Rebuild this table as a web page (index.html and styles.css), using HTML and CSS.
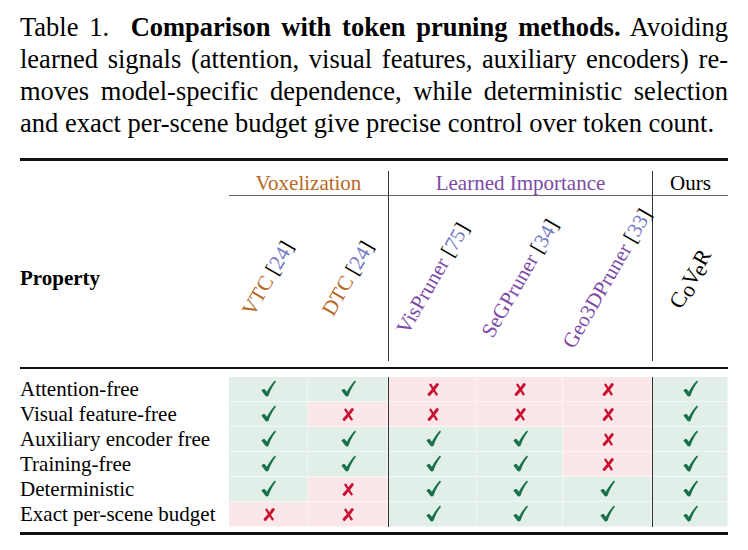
FILE: index.html
```html
<!DOCTYPE html>
<html lang="en">

<head>
    <meta charset="UTF-8">
    <meta name="viewport" content="width=device-width, initial-scale=1.0">
    <title>Table 1</title>
    <link rel="stylesheet" href="styles.css">
</head>

<body>
    <svg class="defs" aria-hidden="true">
        <symbol id="ck" viewBox="0 0 15 17">
            <path d="M0.4 10.6 C1.4 9.2 3 8.4 4 9.4 L5.9 11.8 C8.3 7.4 10.8 3.8 13.9 0.6 L15 1.8 C12.1 5.2 9.7 9.6 7.6 15.5 C7 16.7 5.1 16.9 4.4 15.8 Z" />
        </symbol>
        <symbol id="xx" viewBox="0 0 12 13">
            <path d="M10.2 1.6 C8 4.4 5.4 8 2.2 11.4" stroke-width="3" stroke-linecap="round" fill="none" />
            <path d="M3.4 1.6 C5.3 4.6 7.4 8 9.6 11.4" stroke-width="2.3" stroke-linecap="round" fill="none" />
        </symbol>
    </svg>

    <div class="page">
        <!--Caption------------------------------------------------------------------------------------->
        <p class="caption">Table 1.&nbsp; <b>Comparison with token pruning methods.</b> Avoiding
            learned signals (attention, visual features, auxiliary encoders) re&shy;moves model-specific dependence,
            while deterministic selection and exact per-scene budget give precise control over token count.</p>

        <!--Table--------------------------------------------------------------------------------------->
        <table class="cmp">
            <colgroup>
                <col class="c-prop">
                <col class="c-vtc">
                <col class="c-dtc">
                <col class="c-vis">
                <col class="c-seg">
                <col class="c-geo">
                <col class="c-ours">
            </colgroup>
            <tr class="sp sp-top"><td></td><td></td><td></td><td></td><td></td><td></td><td></td></tr>
            <tr class="groups">
                <td></td>
                <td colspan="2" class="rule vox">Voxelization</td>
                <td colspan="3" class="rule vl learn">Learned Importance</td>
                <td class="rule vl">Ours</td>
            </tr>
            <tr class="names">
                <td class="prop">Property</td>
                <td><div class="rot"><span class="vox">VTC <span class="cite">[<i>24</i>]</span></span></div></td>
                <td><div class="rot"><span class="vox">DTC <span class="cite">[<i>24</i>]</span></span></div></td>
                <td class="vl"><div class="rot"><span class="learn">VisPruner <span class="cite">[<i>75</i>]</span></span></div></td>
                <td><div class="rot"><span class="learn">SeGPruner <span class="cite">[<i>34</i>]</span></span></div></td>
                <td><div class="rot"><span class="learn">Geo3DPruner <span class="cite">[<i>33</i>]</span></span></div></td>
                <td class="vl"><div class="rot"><span class="logo">C<span class="lo">o</span>V<span class="lo">e</span><span class="hi">R</span></span></div></td>
            </tr>
            <tr class="sp sp-mid"><td></td><td></td><td></td><td></td><td></td><td></td><td></td></tr>
            <tr class="sp sp-gap"><td></td><td></td><td></td><td></td><td></td><td></td><td></td></tr>

            <tr class="row">
                <td class="prop-name">Attention-free</td>
                <td class="y"><svg class="ck"><use href="#ck" /></svg></td>
                <td class="y"><svg class="ck"><use href="#ck" /></svg></td>
                <td class="n vl"><svg class="xx"><use href="#xx" /></svg></td>
                <td class="n"><svg class="xx"><use href="#xx" /></svg></td>
                <td class="n"><svg class="xx"><use href="#xx" /></svg></td>
                <td class="y vl"><svg class="ck"><use href="#ck" /></svg></td>
            </tr>
            <tr class="row">
                <td class="prop-name">Visual feature-free</td>
                <td class="y"><svg class="ck"><use href="#ck" /></svg></td>
                <td class="n"><svg class="xx"><use href="#xx" /></svg></td>
                <td class="n vl"><svg class="xx"><use href="#xx" /></svg></td>
                <td class="n"><svg class="xx"><use href="#xx" /></svg></td>
                <td class="n"><svg class="xx"><use href="#xx" /></svg></td>
                <td class="y vl"><svg class="ck"><use href="#ck" /></svg></td>
            </tr>
            <tr class="row">
                <td class="prop-name">Auxiliary encoder free</td>
                <td class="y"><svg class="ck"><use href="#ck" /></svg></td>
                <td class="y"><svg class="ck"><use href="#ck" /></svg></td>
                <td class="y vl"><svg class="ck"><use href="#ck" /></svg></td>
                <td class="y"><svg class="ck"><use href="#ck" /></svg></td>
                <td class="n"><svg class="xx"><use href="#xx" /></svg></td>
                <td class="y vl"><svg class="ck"><use href="#ck" /></svg></td>
            </tr>
            <tr class="row">
                <td class="prop-name">Training-free</td>
                <td class="y"><svg class="ck"><use href="#ck" /></svg></td>
                <td class="y"><svg class="ck"><use href="#ck" /></svg></td>
                <td class="y vl"><svg class="ck"><use href="#ck" /></svg></td>
                <td class="y"><svg class="ck"><use href="#ck" /></svg></td>
                <td class="n"><svg class="xx"><use href="#xx" /></svg></td>
                <td class="y vl"><svg class="ck"><use href="#ck" /></svg></td>
            </tr>
            <tr class="row">
                <td class="prop-name">Deterministic</td>
                <td class="y"><svg class="ck"><use href="#ck" /></svg></td>
                <td class="n"><svg class="xx"><use href="#xx" /></svg></td>
                <td class="y vl"><svg class="ck"><use href="#ck" /></svg></td>
                <td class="y"><svg class="ck"><use href="#ck" /></svg></td>
                <td class="y"><svg class="ck"><use href="#ck" /></svg></td>
                <td class="y vl"><svg class="ck"><use href="#ck" /></svg></td>
            </tr>
            <tr class="row">
                <td class="prop-name">Exact per-scene budget</td>
                <td class="n"><svg class="xx"><use href="#xx" /></svg></td>
                <td class="n"><svg class="xx"><use href="#xx" /></svg></td>
                <td class="y vl"><svg class="ck"><use href="#ck" /></svg></td>
                <td class="y"><svg class="ck"><use href="#ck" /></svg></td>
                <td class="y"><svg class="ck"><use href="#ck" /></svg></td>
                <td class="y vl"><svg class="ck"><use href="#ck" /></svg></td>
            </tr>
            <tr class="sp sp-end"><td></td><td></td><td></td><td></td><td></td><td></td><td></td></tr>
        </table>
    </div>
</body>

</html>
```

FILE: styles.css
```css
body {
    margin: 0;
    background-color: white;
    color: black;
    font-family: "Liberation Serif", "Times New Roman", serif;
}

.defs {
    position: absolute;
    width: 0;
    height: 0;
}

.page {
    width: 708px;
    padding: 11px 20px 0 20px;
}

/* caption */
.caption {
    margin: 0;
    font-size: 26.5px;
    line-height: 32px;
    text-align: justify;
    hyphens: manual;
}

/* table */
.cmp {
    margin-top: 19px;
    width: 708px;
    table-layout: fixed;
    border-collapse: separate;
    border-spacing: 0;
    border-top: 3px solid #111;
    border-bottom: 3px solid #111;
    font-size: 21px;
}

.cmp td {
    padding: 0;
    box-sizing: border-box;
}

.c-prop { width: 209px; }
.c-vtc { width: 79px; }
.c-dtc { width: 80px; }
.c-vis { width: 89px; }
.c-seg { width: 86px; }
.c-geo { width: 89px; }
.c-ours { width: 76px; }

.sp-top td { height: 10px; }
.sp-mid td { height: 8px; border-bottom: 2px solid #111; }
.sp-gap td { height: 8px; }
.sp-end td { height: 5px; }

.groups td {
    height: 25px;
    line-height: 24px;
    text-align: center;
    vertical-align: middle;
}

.rule {
    border-bottom: 1px solid #666;
}

.vl {
    border-left: 1px solid #333;
}

.vox { color: #b9671f; }
.learn { color: #7c4aa6; }
.cite { color: black; }
.cite i { font-style: normal; color: #7479c3; }

.names td {
    height: 165px;
    vertical-align: middle;
}

.prop {
    font-weight: bold;
}

.rot {
    display: flex;
    justify-content: center;
    align-items: center;
    height: 165px;
}

.rot > span {
    display: inline-block;
    white-space: nowrap;
    transform: rotate(-60deg);
}

.logo {
    font-size: 22px;
}

.logo .lo {
    position: relative;
    top: 0.15em;
}

.logo .hi {
    position: relative;
    top: -0.05em;
}

.row td {
    height: 25px;
    text-align: center;
    vertical-align: middle;
    line-height: 0;
}

.row td.prop-name {
    text-align: left;
    line-height: 25px;
    white-space: nowrap;
}

.y {
    background-color: #e2efe8;
    box-shadow: inset -1px -1px 0 rgba(255, 255, 255, 0.55);
}

.n {
    background-color: #fbe6ea;
    box-shadow: inset -1px -1px 0 rgba(255, 255, 255, 0.55);
}

.ck {
    width: 15px;
    height: 17px;
    fill: #18714a;
    position: relative;
    top: -1px;
}

.xx {
    width: 12px;
    height: 13px;
    stroke: #c8102f;
}
```
